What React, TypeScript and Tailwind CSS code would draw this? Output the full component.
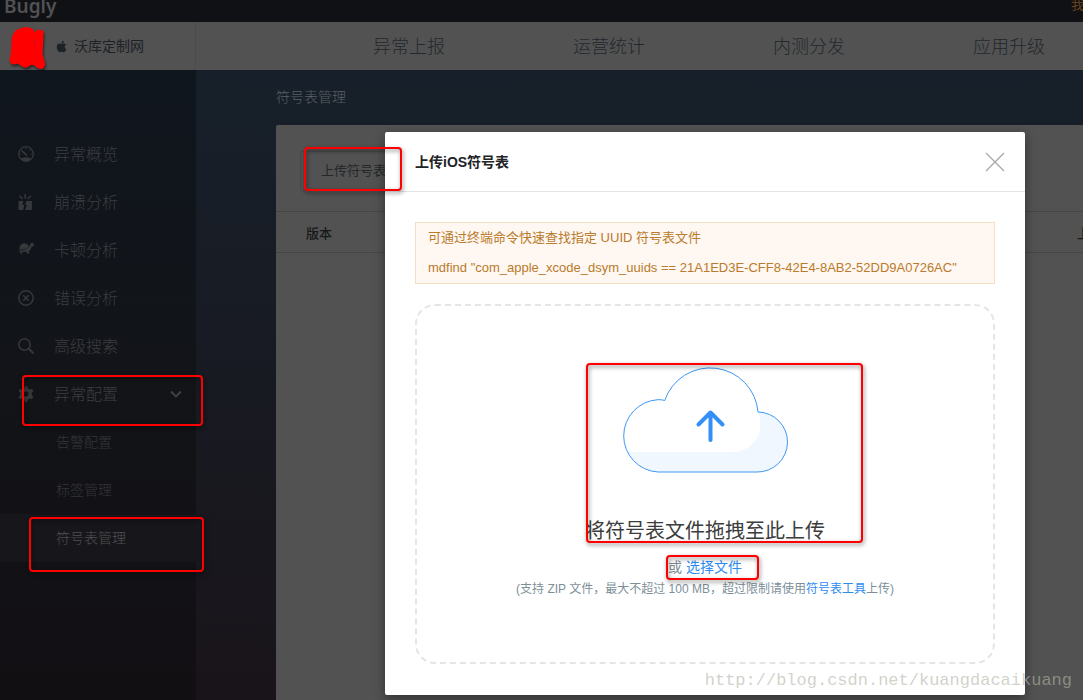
import type { ReactNode } from 'react';
import { FaApple } from 'react-icons/fa';

const navItems = ['异常上报', '运营统计', '内测分发', '应用升级'];

function GaugeIcon() {
  return (
    <svg viewBox="0 0 16 16" className="size-4" fill="none" stroke="currentColor">
      <circle cx="8" cy="8" r="7.3" strokeWidth="1.3" />
      <path d="M3.9 4.8 8.6 9.2" strokeWidth="1.6" strokeLinecap="round" />
      <path d="M8 1.6v1.6M12.6 3.6l-1.1 1.1M14.4 8h-1.6M1.6 8h1.4" strokeWidth="1.1" />
      <path d="M3 12.2q5-1.7 10 0Q11 15.2 8 15.2t-5-3Z" fill="currentColor" stroke="none" />
    </svg>
  );
}

function CrashIcon() {
  return (
    <svg viewBox="0 0 16 16" className="size-4" fill="currentColor">
      <path d="M0.5 7h5l-1.300 3.400 2 .6-1 5H.5ZM8.300 7h5.600v9H7l2-4.900-2-.6Z" />
      <path d="M7.200 0v4.600M1.500 1.800l3.200 3.200M12.900 1.800l-3.200 3.200" stroke="currentColor" strokeWidth="1.500" />
    </svg>
  );
}

function TurtleIcon() {
  return (
    <svg viewBox="0 0 16 16" className="size-4" fill="currentColor">
      <path d="M1.300 7.500C1.300 3.600 3.300 1.200 6.200 1.200c2.400 0 4 1.500 4.700 3.500Q7.500 8.200 1.300 7.500Z" />
      <path d="M.3 8.200q6.200 1 10.500-2.600L12.300 2q1-1.600 2.900-1.100l.8 2q-.2 1.800-2.100 1.800l-2 3.600-1 1 .3 2.500H9.300L8.400 9.800H4.500L4 11.600H2.200l-.1-2.200Z" />
    </svg>
  );
}

function ErrorIcon() {
  return (
    <svg viewBox="0 0 16 16" className="size-4" fill="none" stroke="currentColor" strokeWidth="1.500">
      <circle cx="8" cy="8" r="7.200" />
      <path d="m5.200 5.200 5.600 5.600M10.800 5.200l-5.600 5.600" />
    </svg>
  );
}

function SearchIcon() {
  return (
    <svg viewBox="0 0 16 16" className="size-4" fill="none" stroke="currentColor">
      <circle cx="6.500" cy="6.500" r="5.700" strokeWidth="1.500" />
      <path d="m10.800 10.800 4.600 4.600" strokeWidth="2" />
    </svg>
  );
}

function GearIcon() {
  return (
    <svg viewBox="0 0 16 16" className="size-4" fill="none" stroke="currentColor">
      <circle cx="8" cy="8" r="4.200" strokeWidth="3.400" />
      <path d="M8 .3v3M8 12.700v3M1.300 4.150l2.600 1.500M12.100 10.350l2.600 1.500M1.300 11.850l2.600-1.500M12.100 5.650l2.600-1.500" strokeWidth="3" />
    </svg>
  );
}

const menu: { label: string; icon: ReactNode }[] = [
  { label: '异常概览', icon: <GaugeIcon /> },
  { label: '崩溃分析', icon: <CrashIcon /> },
  { label: '卡顿分析', icon: <TurtleIcon /> },
  { label: '错误分析', icon: <ErrorIcon /> },
  { label: '高级搜索', icon: <SearchIcon /> },
  { label: '异常配置', icon: <GearIcon /> },
];

const subMenu = ['告警配置', '标签管理', '符号表管理'];

function Sidebar() {
  return (
    <aside className="w-[196px] shrink-0 bg-linear-to-b from-[#10161e] via-[#121418] to-[#120f13] pt-[60px]">
      <nav>
        {menu.map(({ label, icon }, i) => (
          <a key={label} href="#" className="flex h-12 items-center pr-[14px] pl-[18px] text-base font-light text-[#3c3d40]">
            <span className="text-[#37383b]">{icon}</span>
            <span className="ml-5 flex-1 pt-[2px]">{label}</span>
            {i === 5 && (
              <svg viewBox="0 0 12 12" className="size-3" fill="none" stroke="#414245" strokeWidth="1.800">
                <path d="m1 3.500 5 5 5-5" />
              </svg>
            )}
          </a>
        ))}
        {subMenu.map((label, i) => (
          <a
            key={label}
            href="#"
            className={
              i === 2
                ? 'flex h-12 items-center bg-[#17171b] pl-14 text-sm font-light text-[#505052]'
                : 'flex h-12 items-center pl-14 text-sm font-light text-[#343538]'
            }
          >
            {label}
          </a>
        ))}
      </nav>
    </aside>
  );
}

function CloudUpload() {
  const cloud = 'M39 107A36.200 36.200 0 0 1 39 34.700Q43 34.500 45.700 35.500A48 48 0 0 1 139 47A30 30 0 0 1 138 107Z';
  return (
    <svg viewBox="1 0 170 110" className="h-[110px] w-[170px]" fill="none">
      <clipPath id="cloud">
        <path d={cloud} />
      </clipPath>
      <path d={cloud} fill="#f0f7ff" />
      <path d="M0 0H139V47Q141.500 53 141.500 60A27 27 0 0 1 114 87H0Z" fill="#fff" clipPath="url(#cloud)" />
      <path d={cloud} stroke="#3c98f5" />
      <path d="M91.500 48V75M79.500 59.500 91.500 47.500l12 12" stroke="#3290f7" strokeWidth="4" strokeLinecap="round" strokeLinejoin="round" />
    </svg>
  );
}

function UploadDialog() {
  return (
    <section role="dialog" aria-labelledby="dialog-title" className="w-[640px] rounded-[2px] bg-white shadow-[0_4px_12px_rgba(0,0,0,0.4)]">
      <header className="flex h-[60px] items-center justify-between border-b border-[#e3e4e6] px-[30px]">
        <h2 id="dialog-title" className="text-sm font-bold text-[#222325]">上传iOS符号表</h2>
        <button aria-label="关闭" className="-mr-[10px]">
          <svg viewBox="0 0 20 20" className="size-5" stroke="#a6a6a6" strokeWidth="1.200">
            <path d="m1 1 18 18M19 1 1 19" />
          </svg>
        </button>
      </header>
      <div className="px-[30px] pt-[30px] pb-[31px]">
        <div className="border border-[#f5dfc2] bg-[#fff7f1] px-3 text-[13px] leading-[30px] text-[#b97b2c]">
          <p>可通过终端命令快速查找指定 UUID 符号表文件</p>
          <p>mdfind "com_apple_xcode_dsym_uuids == 21A1ED3E-CFF8-42E4-8AB2-52DD9A0726AC"</p>
        </div>
        <div className="mt-5 flex h-[360px] flex-col items-center rounded-[20px] border-2 border-dashed border-[#e5e5e5] pt-[59px]">
          <CloudUpload />
          <p className="mt-10 text-xl leading-8 text-[#3c3c3c]">将符号表文件拖拽至此上传</p>
          <p className="mt-[10px] text-sm leading-[20px] text-[#7d8a93]">
            或 <button className="text-[#2d8cf0]">选择文件</button>
          </p>
          <p className="text-xs leading-6 text-[#7d8f99]">
            (支持 ZIP 文件，最大不超过 100 MB，超过限制请使用
            <a href="#" className="text-[#2d8cf0]">符号表工具</a>
            上传)
          </p>
        </div>
      </div>
    </section>
  );
}

const marks = [
  'left-[304px] top-[147px] h-11 w-[98px]',
  'left-[22px] top-[375px] h-[51px] w-[181px]',
  'left-[29px] top-[517px] h-[55px] w-[175px]',
  'left-[586px] top-[363px] h-[180px] w-[277px]',
  'left-[666px] top-[555px] h-[25px] w-[93px]',
];

export default function App() {
  return (
    <div className="relative flex h-screen flex-col overflow-hidden bg-[#17161b] font-['Liberation_Sans','Noto_Sans_CJK_SC',sans-serif]">
      <div className="flex h-[22px] shrink-0 items-center justify-between bg-[#101114] pl-1">
        <span className="pb-[10px] font-['Noto_Sans',sans-serif] text-[19px] leading-7 font-semibold text-[#505154]">Bugly</span>
        <span className="w-3 pb-3 text-[13px] leading-5 whitespace-nowrap text-[#66401c]">我</span>
      </div>

      <header className="flex h-12 shrink-0 bg-[#525252]">
        <div className="flex w-[196px] shrink-0 items-center border-r border-[#4b4b4b] pl-[55px] text-sm text-[#1c2225]">
          <FaApple className="size-[13px]" />
          <span className="ml-[6px]">沃库定制网</span>
        </div>
        <nav className="ml-[113px] flex">
          {navItems.map((item) => (
            <a key={item} href="#" className="flex w-[200px] shrink-0 items-center justify-center pt-px text-lg font-light text-[#22282c]">
              {item}
            </a>
          ))}
        </nav>
      </header>

      <div className="flex min-h-0 flex-1">
        <Sidebar />
        <main className="flex min-w-0 flex-1 flex-col bg-linear-to-b from-[#17202a] via-[#181a22] to-[#19141a] pl-20">
          <h1 className="h-[55px] text-sm leading-[55px] font-light text-[#5b5f64]">符号表管理</h1>
          <div className="flex-1 overflow-hidden rounded-tl-[2px] bg-[#525252]">
            <div className="flex h-[86px] items-start px-6 pt-[26px]">
              <button className="h-10 rounded-[2px] border border-[#494949] px-5 text-[13px] text-[#24282a]">上传符号表</button>
            </div>
            <table className="w-[1020px] table-fixed border-y border-[#454545] text-left text-[13px] text-[#161819]">
              <thead>
                <tr>
                  <th className="h-[41px] w-[801px] pt-[3px] pl-[30px] font-medium">版本</th>
                  <th className="pt-[3px] font-medium">上</th>
                </tr>
              </thead>
            </table>
          </div>
        </main>
      </div>

      <div className="absolute inset-0 flex items-start justify-end pt-[132px] pr-[58px]">
        <UploadDialog />
      </div>

      <svg viewBox="0 0 40 46" className="absolute top-6 left-[8px] h-[46px] w-10 drop-shadow-[1px_2px_1px_rgba(0,0,0,0.5)]">
        <path
          fill="#f00"
          d="M3.500 18C3.500 10 7 6 12 4.500Q18 2 24 4.500Q26 5.500 26.500 8.500Q29 4.500 34 6Q36.500 7.500 35.500 11L35 22 34.500 30 37 39Q37.500 45 32.500 45Q29.500 45 27 42Q24 40 22 41.500Q18 45.500 13.500 42L9.500 39.500Q2 42.500 1.500 35.500L3 28Z"
        />
        <path d="M26.500 15V21" stroke="#b01818" strokeWidth="0.800" />
      </svg>
      {marks.map((place) => (
        <div
          key={place}
          className={`pointer-events-none absolute rounded-[4px] border-2 border-[#f00] drop-shadow-[1px_2px_2px_rgba(0,0,0,0.5)] ${place}`}
        />
      ))}
      <p className="absolute right-[11px] bottom-[7px] font-['Liberation_Mono',monospace] text-[17px] leading-6 text-[#b4b4a8]/60">
        http://blog.csdn.net/kuangdacaikuang
      </p>
    </div>
  );
}
